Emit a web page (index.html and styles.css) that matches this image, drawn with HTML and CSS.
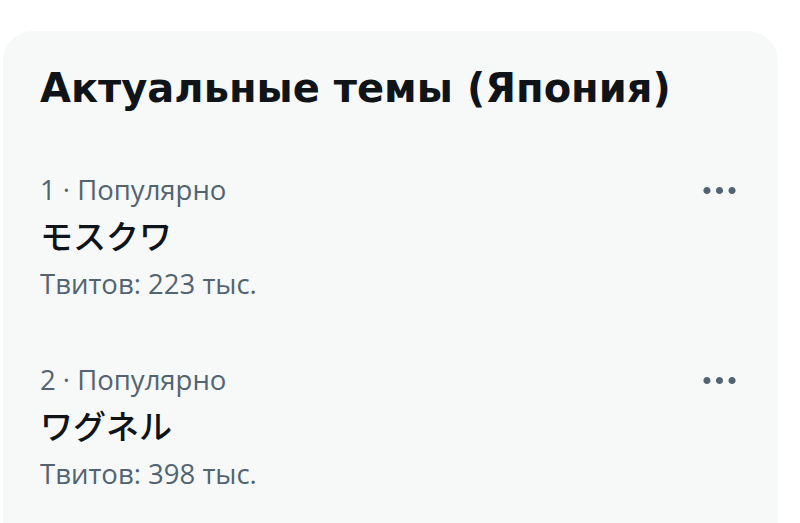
FILE: index.html
```html
<!DOCTYPE html>
<html lang="ru">
<head>
<meta charset="UTF-8">
<title>Актуальные темы</title>
<link rel="stylesheet" href="styles.css">
</head>
<body>
	<div class="tendencias">
		<h2 class="titulo">Актуальные темы (Япония)</h2>

		<div class="tema">
			<div class="datos">
				<div class="contexto">1 · Популярно</div>
				<div class="nombre">モスクワ</div>
				<div class="cuenta">Твитов: 223 тыс.</div>
			</div>
			<svg class="mas" viewBox="0 0 24 24"><path d="M3 12c0-1.1.9-2 2-2s2 .9 2 2-.9 2-2 2-2-.9-2-2zm9 2c1.1 0 2-.9 2-2s-.9-2-2-2-2 .9-2 2 .9 2 2 2zm7 0c1.1 0 2-.9 2-2s-.9-2-2-2-2 .9-2 2 .9 2 2 2z"/></svg>
		</div>

		<div class="tema">
			<div class="datos">
				<div class="contexto">2 · Популярно</div>
				<div class="nombre">ワグネル</div>
				<div class="cuenta">Твитов: 398 тыс.</div>
			</div>
			<svg class="mas" viewBox="0 0 24 24"><path d="M3 12c0-1.1.9-2 2-2s2 .9 2 2-.9 2-2 2-2-.9-2-2zm9 2c1.1 0 2-.9 2-2s-.9-2-2-2-2 .9-2 2 .9 2 2 2zm7 0c1.1 0 2-.9 2-2s-.9-2-2-2-2 .9-2 2 .9 2 2 2z"/></svg>
		</div>
	</div>
</body>
</html>
```

FILE: styles.css
```css
body{
	margin:0;
	background-color:#fff;
	font-family:"Open Sans", "Noto Sans CJK JP", sans-serif;
	overflow:hidden;
}

.tendencias{
	margin:31px 0 0 3px;
	width:775px;
	height:600px;
	background-color:#f7f9f9;
	border-radius:30px 30px 0 0;
}

.titulo{
	margin:0;
	padding:33px 37px 30px 37px;
	font-family:"DejaVu Sans", sans-serif;
	font-size:40px;
	line-height:48px;
	font-weight:bold;
	color:#0f1419;
}

.tema{
	display:flex;
	justify-content:space-between;
	align-items:flex-start;
	padding:33px 37px;
}

.contexto, .cuenta{
	font-size:27.5px;
	line-height:30px;
	color:#536471;
}

.nombre{
	margin-top:12px;
	font-family:"Noto Sans CJK JP", sans-serif;
	font-size:33px;
	line-height:36px;
	font-weight:500;
	color:#0f1419;
}

.cuenta{
	margin-top:16px;
}

.mas{
	width:43px;
	height:43px;
	margin-top:-6px;
	fill:#536471;
}
```
